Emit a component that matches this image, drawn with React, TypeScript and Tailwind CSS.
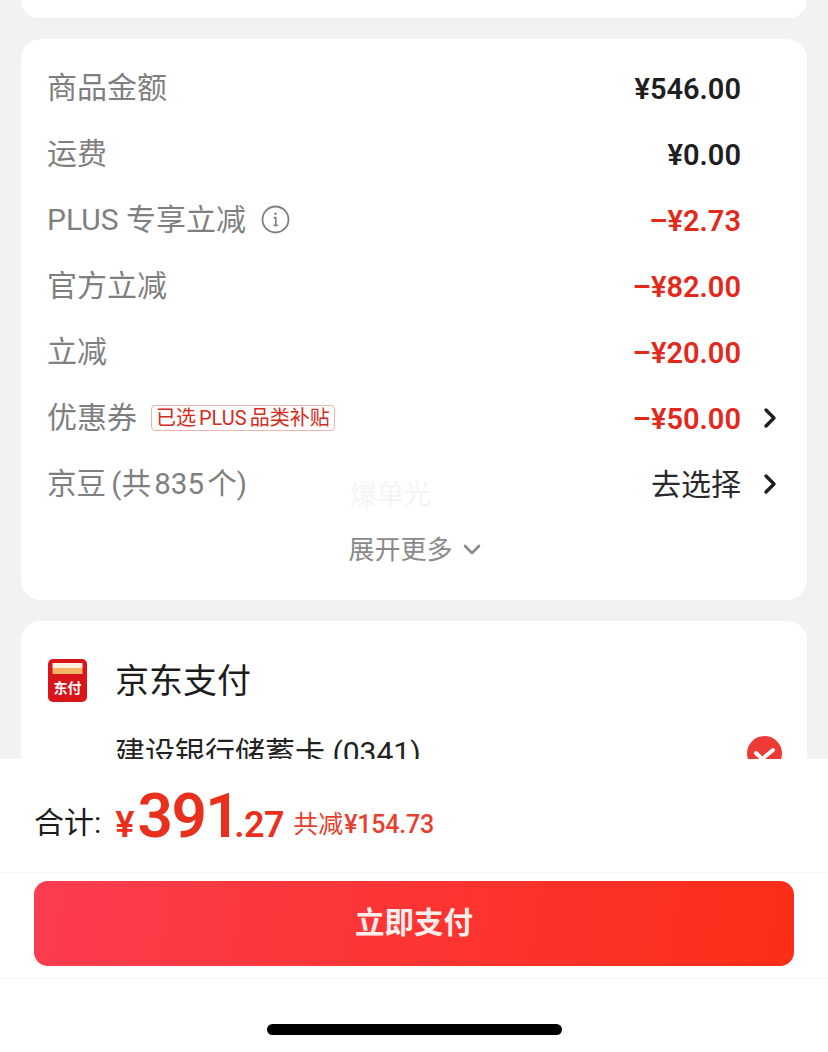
const cjk = "font-['Roboto','Noto_Sans_CJK_SC',sans-serif]";

function Chevron() {
  return (
    <svg width="14" height="22" viewBox="0 0 14 22" fill="none" stroke="#1f1f1f" strokeWidth="3.4" strokeLinecap="round" strokeLinejoin="round">
      <path d="M3 3l8 8-8 8" />
    </svg>
  );
}

function Row({ label, value, red, arrow, children }: { label: React.ReactNode; value: string; red?: boolean; arrow?: boolean; children?: React.ReactNode }) {
  return (
    <div className="flex h-[66px] items-center justify-between">
      <div className="-mt-[1px] flex items-center text-[30px] text-[#7f7f7f]">
        {label}
        {children}
      </div>
      <div className="flex items-center">
        <span className={`pt-[3px] text-[29px] font-semibold ${red ? "text-[#e2291c]" : "text-[#1f1f1f]"}`}>{value}</span>
        <div className="ml-[22px] flex w-[14px] justify-center">{arrow && <Chevron />}</div>
      </div>
    </div>
  );
}

export default function App() {
  return (
    <div className={`flex h-[1052px] w-[828px] flex-col overflow-hidden bg-white ${cjk}`}>
      <div className="h-[759px] shrink-0 overflow-hidden bg-[#f2f2f2] px-[21px]">
        <div className="h-[18px] rounded-b-[20px] bg-white" />

        <div className="relative mt-[21px] h-[561px] rounded-[20px] bg-white pl-[26px] pr-[30px] pt-[16px]">
          <Row label="商品金额" value="¥546.00" />
          <Row label="运费" value="¥0.00" />
          <Row label="PLUS 专享立减" value="–¥2.73" red>
            <svg className="ml-[15px]" width="29" height="29" viewBox="0 0 29 29" fill="none" stroke="#7f7f7f">
              <circle cx="14.5" cy="14.5" r="13" strokeWidth="1.8" />
              <circle cx="14.5" cy="8.8" r="1.2" fill="#7f7f7f" stroke="none" />
              <path d="M12.6 12.6h2.2v7.6M12.6 20.4h4.2" strokeWidth="1.6" />
            </svg>
          </Row>
          <Row label="官方立减" value="–¥82.00" red />
          <Row label="立减" value="–¥20.00" red />
          <Row label="优惠券" value="–¥50.00" red arrow>
            <span className="ml-[14px] flex h-[26px] items-center rounded-[4px] border border-[#eeb4b0] px-[4px] text-[20px] text-[#d42b20] [word-spacing:-2px]">已选 PLUS 品类补贴</span>
          </Row>
          <div className="flex h-[66px] items-center justify-between">
            <span className="text-[29.5px] text-[#7f7f7f]">
              京豆 <span className="-ml-[2px] [word-spacing:-4px]">(共 835 个)</span>
            </span>
            <div className="flex items-center">
              <span className="text-[30px] text-[#2a2a2a]">去选择</span>
              <div className="ml-[22px] flex w-[14px] justify-center"><Chevron /></div>
            </div>
          </div>
          <div className="flex h-[66px] items-center justify-center gap-[10px] pl-[5px] text-[26px] text-[#8a8a8a]">
            展开更多
            <svg width="18" height="12" viewBox="0 0 18 12" fill="none" stroke="#8a8a8a" strokeWidth="2.6" strokeLinecap="round" strokeLinejoin="round">
              <path d="M2 2l7 7 7-7" />
            </svg>
          </div>
          <span className="absolute left-[329px] top-[436px] text-[27px] text-[#f4f4f4]">爆单光</span>
        </div>

        <div className="mt-[21px] h-[200px] rounded-[20px] bg-white pl-[27px] pr-[25px] pt-[38px]">
          <div className="flex items-center">
            <svg className="-mt-[1px] mb-[1px]" width="39" height="43" viewBox="0 0 39 43">
              <rect width="39" height="43" rx="5" fill="#d9151b" />
              <rect x="4.5" y="4" width="30" height="5" fill="#fff3e0" />
              <rect x="4.5" y="9" width="30" height="6" fill="#f5b562" />
              <text x="19.5" y="34" textAnchor="middle" fontSize="14" fontWeight="700" fill="#ffffff" fontFamily="Noto Sans CJK SC">东付</text>
            </svg>
            <span className="ml-[28px] text-[34px] leading-[44px] text-[#1c1c1c]">京东支付</span>
          </div>
          <div className="mt-[28px] flex items-center justify-between pl-[67px]">
            <span className="text-[30px] leading-[44px] text-[#222222]">建设银行储蓄卡 (0341)</span>
            <svg width="35" height="35" viewBox="0 0 35 35">
              <circle cx="17.5" cy="17.5" r="17.5" fill="#ee3a35" />
              <path d="M9 17l6 6 11-9" fill="none" stroke="#ffffff" strokeWidth="4" strokeLinecap="round" strokeLinejoin="round" />
            </svg>
          </div>
        </div>
      </div>

      <div className="flex flex-1 flex-col">
        <div className="flex h-[114px] items-center border-b border-[#f6f6f6] pl-[34px] pt-[14px]">
          <span className="text-[30px] text-[#1c1c1c]">合计:</span>
          <span className="-mt-[8px] ml-[14px] flex items-baseline font-semibold text-[#e8301c]">
            <span className="text-[36px]">¥</span>
            <span className="ml-[3px] text-[62px] leading-none tracking-[-1.5px]">
              39<span className="tracking-[-6.5px]">1</span>
            </span>
            <span className="text-[36px] tracking-[-0.5px]">.27</span>
          </span>
          <span className="ml-[9px] flex items-baseline pt-[4px] text-[#e8402f]">
            <span className="text-[25px]">共减</span>
            <span className="ml-[1px] text-[25px] font-medium tracking-[-0.2px]">¥154.73</span>
          </span>
        </div>
        <div className="h-[106px] border-b border-[#f6f6f6] px-[34px] pt-[8px]">
          <button className="flex h-[85px] w-full items-center justify-center rounded-[14px] bg-[linear-gradient(100deg,#fb3d50,#fd2d17)] text-[29.5px] font-semibold text-[#fdeeee]">
            立即支付
          </button>
        </div>
        <div className="flex flex-1 justify-center pt-[45px]">
          <div className="h-[11px] w-[295px] rounded-full bg-black" />
        </div>
      </div>
    </div>
  );
}
